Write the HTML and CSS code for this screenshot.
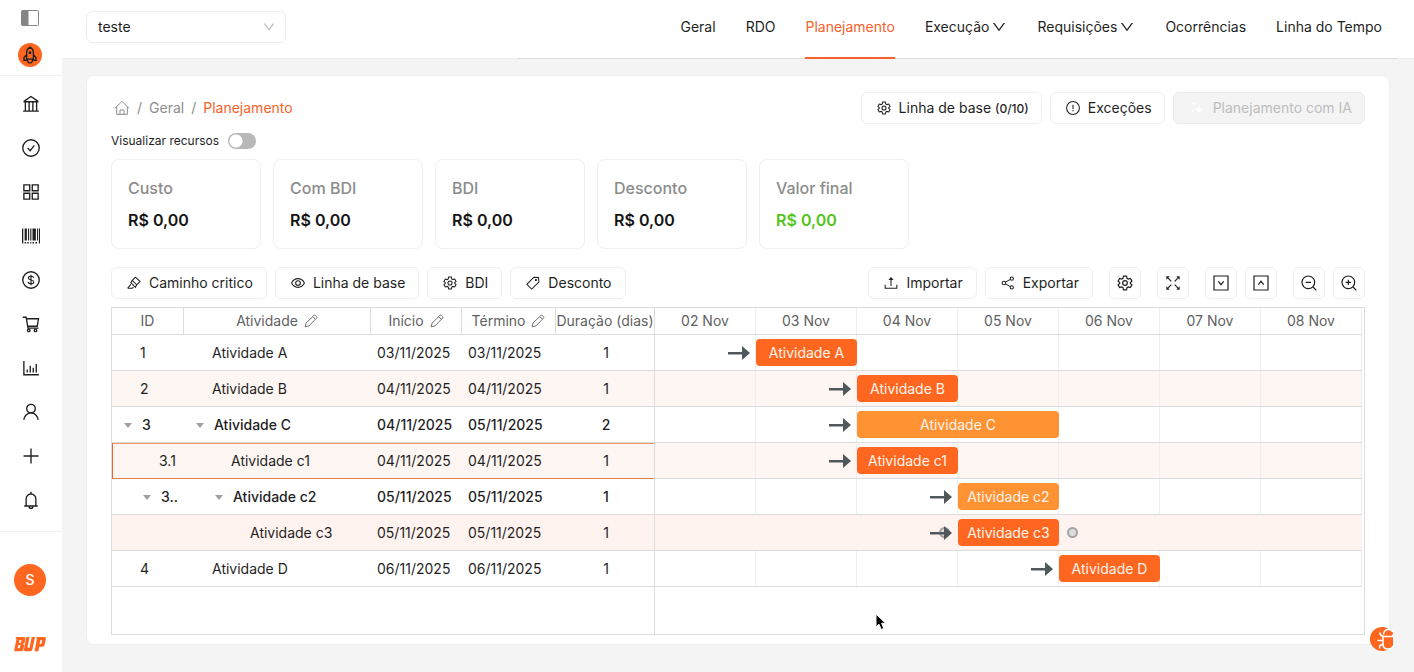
FILE: index.html
```html
<!DOCTYPE html>
<html lang="pt-BR">
<head>
<meta charset="utf-8">
<meta name="viewport" content="width=device-width, initial-scale=1">
<title>Planejamento</title>
<link rel="stylesheet" href="styles.css">
</head>
<body>
<svg class="sprite" aria-hidden="true">
  <symbol id="i-gear" viewBox="0 0 24 24"><path d="M9.700 1.800h4.600l.7 3.200 2 1.200 3.100-1 2.300 4-2.400 2.200v1.200l2.400 2.200-2.300 4-3.100-1-2 1.200-.7 3.200H9.700L9 19l-2-1.200-3.100 1-2.300-4L4 12.600v-1.200L1.600 9.200l2.300-4 3.100 1L9 5z"/><circle cx="12" cy="12" r="3.500"/></symbol>
  <symbol id="i-pencil" viewBox="0 0 24 24"><path d="M2 22l1.500-6.500L17 2.500a2 2 0 0 1 2.800 0l1.700 1.700a2 2 0 0 1 0 2.800L8.500 20.500zM15 4.500L19.500 9"/></symbol>
  <symbol id="i-down" viewBox="0 0 1024 1024"><path d="M884 256h-75c-5.100 0-9.900 2.500-12.900 6.600L512 654.200 227.900 262.600c-3-4.100-7.800-6.600-12.900-6.600h-75c-6.500 0-10.300 7.400-6.500 12.700l352.600 486.100c12.800 17.600 39 17.600 51.700 0l352.600-486.100c3.900-5.300.1-12.700-6.400-12.700z" fill="currentColor" stroke="none"/></symbol>
  <symbol id="i-arrow" viewBox="0 0 22 14"><path d="M0 6h14V0l8 7-8 7V8.500H0z" fill="currentColor" stroke="none"/></symbol>
</svg>

<div class="app">
  <aside class="sidebar">
    <div class="sidebar-top">
      <button class="plain" type="button" aria-label="Recolher menu"><svg class="icon panel-icon" viewBox="0 0 20 18"><rect x="1.500" y="1.500" width="17" height="15" rx="1"/><path d="M2 2h6v14H2z" fill="currentColor"/></svg></button>
      <button class="rocket" type="button" aria-label="Início rápido"><svg class="icon" viewBox="0 0 24 24"><path d="M7.500 17.500V8.500C7.500 5.500 9.500 3 12 1.500c2.500 1.500 4.500 4 4.500 7v9zM7.500 11.500L4 15.500V19h3.500M16.500 11.500l3.500 4V19h-3.500M8.500 18c0 2.500 1.500 4.500 3.500 4.500s3.500-2 3.500-4.500"/><circle cx="12" cy="9" r="1"/></svg></button>
    </div>
    <nav class="side-nav" aria-label="Menu lateral">
      <a href="#" aria-label="Empresa"><svg class="icon" viewBox="0 0 24 24"><path d="M1.500 21.500h21M2 9h20M2.500 8.500L12 2l9.500 6.500M4.500 9v12M9.500 9v12M14.500 9v12M19.500 9v12"/></svg></a>
      <a href="#" aria-label="Tarefas"><svg class="icon" viewBox="0 0 24 24"><circle cx="12" cy="12" r="11"/><path d="M7.500 12l3.300 3.500L16.500 8.500"/></svg></a>
      <a href="#" aria-label="Painéis"><svg class="icon" viewBox="0 0 24 24"><path d="M2.500 2.500h7.800v7.800H2.500zM13.700 2.500h7.800v7.800h-7.800zM2.500 13.700h7.800v7.800H2.500zM13.700 13.700h7.800v7.800h-7.800z"/></svg></a>
      <a href="#" aria-label="Código de barras"><svg class="icon solid" viewBox="0 0 24 24"><path d="M0 2h1.700v20H0zM3.500 2h3v16h-3zM8 2h1.500v16H8zM11 2h1.500v16H11zM14 2h4.500v16H14zM20 2h1.300v16H20zM22.500 2H24v20h-1.500zM3.500 20h2v2h-2zM7 20h2v2H7zM11 20h1.500v2H11zM14 20h2v2h-2zM18 20h2v2h-2z"/></svg></a>
      <a href="#" aria-label="Financeiro"><svg class="icon" viewBox="0 0 24 24"><circle cx="12" cy="12" r="11"/><path d="M15.500 9.300C15.300 7.800 14 7 12 7s-3.500.9-3.500 2.400c0 3.500 7.200 1.600 7.200 5.100 0 1.600-1.500 2.500-3.700 2.500s-3.600-.9-3.800-2.500M12 5v14" stroke-width="1.500"/></svg></a>
      <a href="#" aria-label="Compras"><svg class="icon" viewBox="0 0 24 24"><path d="M1 3h4.500l2.500 14.500h14M6 5h16l-1.700 10H7.500"/><circle cx="9" cy="20.500" r="1.700"/><circle cx="18" cy="20.500" r="1.700"/></svg></a>
      <a href="#" aria-label="Relatórios"><svg class="icon" viewBox="0 0 24 24"><path d="M2.500 2.500v18.500H22.500M7 18v-4M11 18V9M15 18v-6.500M19 18V6.500"/></svg></a>
      <a href="#" aria-label="Usuários"><svg class="icon" viewBox="0 0 24 24"><circle cx="12" cy="7.500" r="5.700"/><path d="M2.500 22.500c.4-5.300 4.500-9.300 9.500-9.300s9.100 4 9.500 9.300"/></svg></a>
      <a href="#" aria-label="Adicionar"><svg class="icon" viewBox="0 0 24 24"><path d="M12 2v20M2 12h20"/></svg></a>
      <a href="#" aria-label="Notificações"><svg class="icon" viewBox="0 0 24 24"><path d="M3 20h18M5.500 20v-9.500a6.500 6.500 0 0 1 13 0V20M12 4V1M9.500 20.500a2.500 2.500 0 0 0 5 0"/></svg></a>
    </nav>
    <div class="sidebar-bottom">
      <button class="avatar" type="button">S</button>
      <svg class="brand" viewBox="0 0 32 16" role="img" aria-label="BUP"><path fill-rule="evenodd" d="M2 1h8.500l1 1.200-1 4.800-1.500 1 1.200 1.200L9.300 14l-1.600 1.300H0L2.500 3H1.600zM5.500 4l-.6 2.700H7L7.500 4zM4.400 9l-.7 3.200h2L6.400 9zM12.300 1h3.200l-2 10.800h2L17.700 1h3.400l-2.800 13-1.500 1.300h-6l-1-1.300zM22.500 1h8.300l1.200 1.300-1.500 7L29 10.800h-3.700l-1 4.500h-3.700L22.800 3zM26.500 4l-.9 4h1.700l.9-4z"/></svg>
    </div>
  </aside>

  <div class="content">
    <header class="topbar">
      <div class="picker">
        <select aria-label="Obra"><option>teste</option></select>
        <svg class="icon" aria-hidden="true"><use href="#i-down"/></svg>
      </div>
      <nav class="tabs" aria-label="Seções">
        <a href="#">Geral</a>
        <a href="#">RDO</a>
        <a href="#" class="active" aria-current="page">Planejamento</a>
        <a href="#">Execução <svg class="icon"><use href="#i-down"/></svg></a>
        <a href="#">Requisições <svg class="icon"><use href="#i-down"/></svg></a>
        <a href="#">Ocorrências</a>
        <a href="#">Linha do Tempo</a>
      </nav>
    </header>

    <main class="card">
      <div class="card-head">
        <nav class="crumbs" aria-label="Trilha">
          <a href="#" aria-label="Página inicial"><svg class="icon" viewBox="0 0 24 24"><path d="M1.500 12.500L12 2l10.500 10.500M4 10.500V21.500h16V10.500M9 21.500v-6.500h6v6.500"/></svg></a>
          <span>/</span><a href="#">Geral</a><span>/</span><span class="current">Planejamento</span>
        </nav>
        <div class="actions">
          <button class="btn" type="button"><svg class="icon"><use href="#i-gear"/></svg><span>Linha de base <small>(0/10)</small></span></button>
          <button class="btn" type="button"><svg class="icon" viewBox="0 0 24 24"><circle cx="12" cy="12" r="11"/><path d="M12 6.500v7M12 15.500v2"/></svg>Exceções</button>
          <button class="btn" type="button" disabled><svg class="icon sparkle" viewBox="0 0 24 24"><path d="M15 7l2 5.500 5 2-5 2-2 5.500-2-5.500-5-2 5-2zM6 1l1 3 3 1-3 1-1 3-1-3-3-1 3-1zM5 14l.8 2.200L8 17l-2.200.8L5 20l-.8-2.200L2 17l2.200-.8z"/></svg>Planejamento com IA</button>
        </div>
      </div>

      <label class="switch-row">Visualizar recursos <input type="checkbox" role="switch" class="switch"></label>

      <dl class="stats">
        <div><dt>Custo</dt><dd>R$ 0,00</dd></div>
        <div><dt>Com BDI</dt><dd>R$ 0,00</dd></div>
        <div><dt>BDI</dt><dd>R$ 0,00</dd></div>
        <div><dt>Desconto</dt><dd>R$ 0,00</dd></div>
        <div><dt>Valor final</dt><dd class="final">R$ 0,00</dd></div>
      </dl>

      <div class="toolbar">
        <div class="tool-group">
          <button class="btn" type="button"><svg class="icon" viewBox="0 0 24 24"><path d="M1 21h8l2-2M1 21l5.500-6.500M6.500 11.500l8 8 2-4.500 6-5.500L14.500 2 9 7.500zM9 7.500l7.500 7.500"/></svg>Caminho critico</button>
          <button class="btn" type="button"><svg class="icon" viewBox="0 0 24 24"><path d="M1 12c2.500-5 6.300-7.500 11-7.500S20.500 7 23 12c-2.500 5-6.300 7.500-11 7.500S3.500 17 1 12z"/><circle cx="12" cy="12" r="4"/></svg>Linha de base</button>
          <button class="btn" type="button"><svg class="icon"><use href="#i-gear"/></svg>BDI</button>
          <button class="btn" type="button"><svg class="icon" viewBox="0 0 24 24"><path d="M13.500 2l8 .5.500 8L9.800 22.500 1.500 14.200z"/><circle cx="17" cy="7" r="1"/></svg>Desconto</button>
        </div>
        <div class="tool-group">
          <button class="btn" type="button"><svg class="icon" viewBox="0 0 24 24"><path d="M2 15v6h20v-6M12 17V5"/><path d="M9.500 6L12 3l2.500 3z" fill="currentColor"/></svg>Importar</button>
          <button class="btn" type="button"><svg class="icon" viewBox="0 0 24 24"><circle cx="5" cy="12" r="3"/><circle cx="18.500" cy="4.500" r="2.700"/><circle cx="18.500" cy="19.500" r="2.700"/><path d="M7.600 10.500l8.500-4.700M7.600 13.500l8.500 4.700"/></svg>Exportar</button>
          <div class="tool-icons">
            <button class="btn square" type="button" aria-label="Configurações"><svg class="icon"><use href="#i-gear"/></svg></button>
            <button class="btn square" type="button" aria-label="Tela cheia"><svg class="icon" viewBox="0 0 24 24"><path d="M4 4l5.500 5.500M20 4l-5.500 5.500M4 20l5.500-5.500M20 20l-5.500-5.500"/><path d="M2 2h5L2 7zM22 2h-5l5 5zM2 22h5l-5-5zM22 22h-5l5-5z" fill="currentColor" stroke="none"/></svg></button>
            <span class="pair">
              <button class="btn square" type="button" aria-label="Expandir tudo"><svg class="icon" viewBox="0 0 24 24"><path d="M1.500 1.500h21v21h-21zM8 9.500l4 5 4-5"/></svg></button>
              <button class="btn square" type="button" aria-label="Recolher tudo"><svg class="icon" viewBox="0 0 24 24"><path d="M1.500 1.500h21v21h-21zM8 14.500l4-5 4 5"/></svg></button>
            </span>
            <span class="pair">
              <button class="btn square" type="button" aria-label="Diminuir zoom"><svg class="icon" viewBox="0 0 24 24"><circle cx="11" cy="11" r="9.500"/><path d="M18 18l5 5M7 11h8"/></svg></button>
              <button class="btn square" type="button" aria-label="Aumentar zoom"><svg class="icon" viewBox="0 0 24 24"><circle cx="11" cy="11" r="9.500"/><path d="M18 18l5 5M7 11h8M11 7v8"/></svg></button>
            </span>
          </div>
        </div>
      </div>

      <div class="gantt">
        <div class="grid-pane">
          <table class="grid">
            <colgroup><col class="c-id"><col class="c-name"><col class="c-start"><col class="c-end"><col class="c-days"></colgroup>
            <thead>
              <tr><th>ID</th><th>Atividade <svg class="icon"><use href="#i-pencil"/></svg></th><th>Início <svg class="icon"><use href="#i-pencil"/></svg></th><th>Término <svg class="icon"><use href="#i-pencil"/></svg></th><th>Duração (dias)</th></tr>
            </thead>
            <tbody>
              <tr><td class="leaf">1</td><td class="leaf">Atividade A</td><td>03/11/2025</td><td>03/11/2025</td><td class="num">1</td></tr>
              <tr class="tint"><td class="leaf">2</td><td class="leaf">Atividade B</td><td>04/11/2025</td><td>04/11/2025</td><td class="num">1</td></tr>
              <tr class="parent"><td><button class="caret" type="button" aria-label="Recolher"></button>3</td><td><button class="caret" type="button" aria-label="Recolher"></button>Atividade C</td><td>04/11/2025</td><td>05/11/2025</td><td class="num">2</td></tr>
              <tr class="tint selected"><td class="level-1">3.1</td><td class="level-1">Atividade c1</td><td>04/11/2025</td><td>04/11/2025</td><td class="num">1</td></tr>
              <tr class="parent nested"><td><button class="caret" type="button" aria-label="Recolher"></button>3..</td><td><button class="caret" type="button" aria-label="Recolher"></button>Atividade c2</td><td>05/11/2025</td><td>05/11/2025</td><td class="num">1</td></tr>
              <tr class="tint hover"><td></td><td class="level-2">Atividade c3</td><td>05/11/2025</td><td>05/11/2025</td><td class="num">1</td></tr>
              <tr><td class="leaf">4</td><td class="leaf">Atividade D</td><td>06/11/2025</td><td>06/11/2025</td><td class="num">1</td></tr>
            </tbody>
          </table>
        </div>
        <div class="timeline">
          <div class="scale"><span>02 Nov</span><span>03 Nov</span><span>04 Nov</span><span>05 Nov</span><span>06 Nov</span><span>07 Nov</span><span>08 Nov</span></div>
          <div class="lane"><div class="bar day-2"><svg class="arrow"><use href="#i-arrow"/></svg>Atividade A</div></div>
          <div class="lane tint"><div class="bar day-3"><svg class="arrow"><use href="#i-arrow"/></svg>Atividade B</div></div>
          <div class="lane"><div class="bar day-3 two-days summary"><svg class="arrow"><use href="#i-arrow"/></svg>Atividade C</div></div>
          <div class="lane tint"><div class="bar day-3"><svg class="arrow"><use href="#i-arrow"/></svg>Atividade c1</div></div>
          <div class="lane"><div class="bar day-4 summary"><svg class="arrow"><use href="#i-arrow"/></svg>Atividade c2</div></div>
          <div class="lane tint hover"><div class="bar day-4"><i class="dot before"></i><svg class="arrow"><use href="#i-arrow"/></svg>Atividade c3<i class="dot after"></i></div></div>
          <div class="lane"><div class="bar day-5"><svg class="arrow"><use href="#i-arrow"/></svg>Atividade D</div></div>
        </div>
      </div>
    </main>
  </div>
</div>

<button class="bug" type="button" aria-label="Reportar problema"><svg viewBox="0 0 26 26"><path d="M24 6.500A12 12 0 1 0 24 19.500z" fill="#ff6720"/><path d="M15.500 11h9.500v7.500c0 2.500-1.500 4-4.500 4s-5-2-5-4.500zM16 8.500c0-3 1.700-5 4.500-5 2.500 0 4 1.500 4.500 3.500v1.500z" fill="#ff6720"/><path d="M15.500 8.500c.3-3.500 2.300-5 5-5 2 0 3.600.8 4.300 2.500M13.500 10.500H25M15 10.500V18c0 3 2 5 5 5 2.500 0 4.300-1 5-3M15.500 10.500l-3-1.500-.7-2.500M15 14.500H9.500M15 18l-3 1.500-.5 3" fill="none" stroke="#fff" stroke-width="1.500"/></svg></button>
<svg class="cursor" viewBox="0 0 12 18" aria-hidden="true"><path d="M1 1v13l3-2.800 2.200 5.300 2.600-1.100-2.200-5.100h4z" fill="#000" stroke="#fff" stroke-width="1"/></svg>
</body>
</html>
```

FILE: styles.css
```css
* { box-sizing: border-box; }

body {
  margin: 0;
  background: #f4f4f4;
  color: #1f1f1f;
  font: 14px/22px Inter, "Liberation Sans", sans-serif;
}

a { color: inherit; text-decoration: none; }
button, select { font: inherit; color: inherit; }
button { cursor: pointer; }

.sprite { position: absolute; width: 0; height: 0; }

.icon {
  flex: none;
  width: 14px;
  height: 14px;
  fill: none;
  stroke: currentColor;
  stroke-width: 1.800;
}
.icon.solid { fill: currentColor; stroke: none; }

.app { display: flex; min-height: 100vh; }

/* Sidebar */
.sidebar {
  display: flex;
  flex-direction: column;
  flex: none;
  width: 62px;
  background: #fff;
}
.sidebar-top {
  display: flex;
  flex-direction: column;
  align-items: center;
  gap: 16px;
  padding: 9px 2px 8px 0;
  border-bottom: 1px solid #f0f0f0;
}
.plain { display: flex; padding: 0; border: 0; background: none; color: #858585; }
.panel-icon { width: 20px; height: 18px; stroke-width: 1; }
.rocket, .avatar {
  display: grid;
  place-items: center;
  padding: 0;
  border: 0;
  border-radius: 50%;
  background: #ff6720;
}
.rocket { width: 24px; height: 24px; }
.rocket .icon { width: 18px; height: 18px; }
.side-nav {
  display: flex;
  flex-direction: column;
  padding: 6px 0 9px;
  border-bottom: 1px solid #f0f0f0;
}
.side-nav a { display: grid; place-items: center; height: 44px; }
.side-nav .icon { width: 18px; height: 18px; }
.sidebar-bottom {
  display: flex;
  flex-direction: column;
  align-items: center;
  gap: 40px;
  padding: 32px 2px 20px 0;
}
.avatar { width: 32px; height: 32px; color: #fff; font-weight: 500; }
.brand { width: 32px; height: 16px; fill: #ff6720; }

/* Top bar */
.content { flex: 1; min-width: 0; }
.topbar {
  display: flex;
  align-items: center;
  justify-content: space-between;
  gap: 24px;
  height: 59px;
  padding: 0 16px 0 24px;
  background: #fff;
  border-bottom: 1px solid #f0f0f0;
}
.picker { display: grid; width: 200px; align-items: center; margin-bottom: 5px; }
.picker > * { grid-area: 1 / 1; }
.picker select {
  height: 32px;
  padding: 0 11px;
  border: 1px solid #ededed;
  border-radius: 6px;
  background: #fff;
  appearance: none;
}
.picker .icon { justify-self: end; margin-right: 10px; color: #b8b8b8; pointer-events: none; }
.tabs {
  display: flex;
  flex: 0 1 880px;
  justify-content: flex-end;
  gap: 30px;
  align-self: stretch;
  margin-bottom: -1px;
  padding-right: 16px;
  border-bottom: 1px solid #dedede;
}
.tabs a {
  display: flex;
  align-items: center;
  gap: 2px;
  margin-bottom: -1px;
  padding-bottom: 4px;
  border-bottom: 2px solid transparent;
  white-space: nowrap;
}
.tabs .active { color: #f5622a; border-color: #f5622a; }
.tabs .icon { width: 16px; height: 16px; }

/* Card */
.card {
  margin: 16px 24px 28px;
  padding: 16px 24px 9px;
  border: 1px solid #efefef;
  border-radius: 8px;
  background: #fff;
}
.card-head, .actions, .toolbar, .tool-group, .tool-icons, .pair { display: flex; align-items: center; }
.card-head, .toolbar { justify-content: space-between; }
.actions { gap: 8px; }
.crumbs { display: flex; align-items: center; gap: 7px; padding-left: 3px; color: #8c8c8c; }
.crumbs a { display: flex; }
.crumbs .icon { width: 16px; height: 16px; stroke-width: 1.500; }
.crumbs .current { color: #f5622a; }

.btn {
  display: inline-flex;
  align-items: center;
  gap: 8px;
  height: 32px;
  padding: 0 12px 0 15px;
  border: 1px solid #efefef;
  border-radius: 6px;
  background: #fff;
  white-space: nowrap;
}
.btn small { font-size: 12px; font-weight: 500; }
.btn:disabled { background: #f4f4f4; border-color: #ececec; color: #bdbdbd; cursor: default; }
.btn .sparkle { width: 16px; fill: #fff; stroke: none; }
.toolbar .btn { padding-right: 13px; }
.toolbar .square { width: 32px; padding: 0; justify-content: center; }
.square .icon { width: 16px; height: 16px; }

.switch-row { display: inline-flex; align-items: center; gap: 9px; margin-top: 6px; font-size: 12px; }
.switch {
  width: 28px;
  height: 16px;
  margin: 0;
  border-radius: 8px;
  appearance: none;
  background: radial-gradient(circle at 8px 8px, #fff 6px, #b8b8b8 7px);
}

.stats { display: flex; gap: 12px; margin: 7px 0 18px; }
.stats > div {
  width: 150px;
  padding: 16px;
  border: 1px solid #f0f0f0;
  border-radius: 8px;
  font-size: 16px;
  line-height: 24px;
}
.stats dt { color: #8c8c8c; font-weight: 500; }
.stats dd { margin: 8px 0 0; font-weight: 600; color: #141414; }
.stats .final { color: #52c41a; }

.toolbar { margin-bottom: 8px; }
.tool-group { gap: 8px; }
.tool-icons { gap: 16px; margin-left: 8px; }
.pair { gap: 8px; }

/* Gantt */
.gantt { display: flex; min-height: 328px; border: 1px solid #dcdcdc; }
.grid-pane { flex: none; width: 543px; border-right: 1px solid #dcdcdc; }
.grid { width: 100%; table-layout: fixed; border-collapse: separate; border-spacing: 0; }
.c-id { width: 72px; }
.c-name { width: 187px; }
.c-start { width: 91px; }
.c-end { width: 94px; }
.grid th {
  height: 27px;
  padding: 0;
  border-right: 1px solid #dcdcdc;
  border-bottom: 1px solid #dcdcdc;
  color: #5f5f5f;
  font-weight: 400;
  white-space: nowrap;
}
.grid th:last-child { border-right: 0; }
.grid th .icon { margin-left: 2px; stroke-width: 1.500; vertical-align: -2px; }
.grid td { height: 36px; padding: 0 6px; border-bottom: 1px solid #dcdcdc; white-space: nowrap; }
.grid td.num { padding-left: 8px; text-align: center; }
.grid td.leaf { padding-left: 28px; }
.grid td.level-1 { padding-left: 47px; }
.grid td.level-2 { padding-left: 66px; }
.parent { font-weight: 500; }
.nested td:nth-child(-n+2) { padding-left: 25px; }
.tint { background: #fdf6f3; }
.tint.hover { background: #fff3ef; }
.selected td { border-bottom-color: #e07b54; box-shadow: inset 0 1px #f0936e; }
.selected td:first-child { border-left: 1px solid #f5622a; }
.grid .selected td:first-child { padding-left: 46px; }
.caret {
  display: inline-grid;
  place-items: center;
  width: 20px;
  height: 16px;
  margin-right: 4px;
  padding: 0;
  border: 0;
  background: none;
  vertical-align: middle;
}
.caret::before { content: ""; border: 4px solid transparent; border-top: 5px solid #a0a0a0; border-bottom: 0; }

.timeline { flex: 1; min-width: 0; padding-right: 2px; }
.scale, .lane { display: grid; grid-template-columns: repeat(7, 1fr); border-bottom: 1px solid #dcdcdc; }
.scale { height: 27px; color: #5f5f5f; text-align: center; line-height: 26px; }
.scale span { border-right: 1px solid #efefef; }
.lane {
  height: 36px;
  align-items: center;
  background-image: linear-gradient(to left, #efefef 1px, transparent 1px);
  background-size: calc(100% / 7) 100%;
}
.bar {
  position: relative;
  height: 27px;
  border-radius: 4px;
  background: #ff6720;
  color: #fff3ea;
  line-height: 27px;
  text-align: center;
  white-space: nowrap;
}
.summary { background: #ff9233; }
.day-2 { grid-column: 2; }
.day-3 { grid-column: 3; }
.day-4 { grid-column: 4; }
.day-5 { grid-column: 5; }
.two-days { grid-column-end: span 2; }
.arrow { position: absolute; top: 7px; right: calc(100% + 6px); width: 22px; height: 14px; color: #50585b; }
.dot {
  position: absolute;
  top: 8px;
  width: 11px;
  height: 11px;
  border: 2px solid #a3a3a3;
  border-radius: 50%;
  background: #dcdcdc;
}
.dot.before { right: calc(100% + 8px); }
.dot.after { left: calc(100% + 8px); }

/* Overlays */
.bug { position: fixed; right: 20px; bottom: 20px; width: 26px; height: 26px; padding: 0; border: 0; background: none; }
.bug svg { display: block; }
.cursor { position: fixed; left: 875px; top: 613px; width: 12px; height: 18px; pointer-events: none; }
```
